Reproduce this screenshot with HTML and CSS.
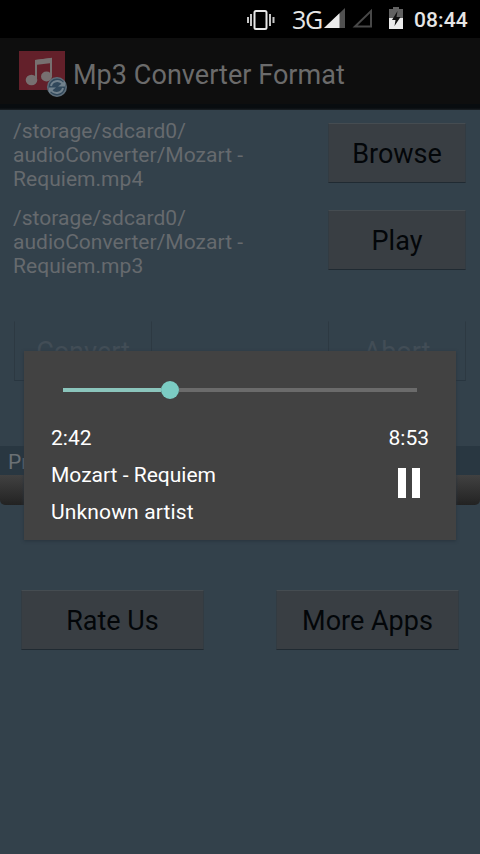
FILE: index.html
```html
<!DOCTYPE html>
<html lang="en">
<head>
<meta charset="utf-8">
<title>Mp3 Converter Format</title>
<link rel="stylesheet" href="styles.css">
</head>
<body>
<div class="screen">
  <header class="status">
    <svg class="vibrate" width="30" height="22" viewBox="0 0 30 22">
      <rect x="8.500" y="2" width="12" height="18" rx="1.500" fill="none" stroke="#e8e8e8" stroke-width="2"/>
      <path d="M5 5v12M2 8v6M24 5v12M27.500 8v6" stroke="#c8c8c8" stroke-width="2"/>
    </svg>
    <span class="network">3G</span>
    <svg class="signal" width="21" height="20" viewBox="0 0 21 20">
      <path d="M21 0v20H0z" fill="#505050"/>
      <path d="M15.500 5.200V20H0z" fill="#ececec"/>
    </svg>
    <svg class="signal-empty" width="21" height="20" viewBox="0 0 21 20">
      <path d="M19 3v15.500H3z" fill="none" stroke="#484848" stroke-width="2"/>
    </svg>
    <svg class="battery" width="14" height="22" viewBox="0 0 14 22">
      <path d="M4 0h6v2h4v20H0V2h4z" fill="#626262"/>
      <path d="M0 11h14v11H0z" fill="#ececec"/>
      <path d="M8.500 4L3 13h3.500L5.500 19l6-9H7.500z" fill="#111"/>
    </svg>
    <span class="clock">08:44</span>
  </header>
  <div class="titlebar">
    <svg class="logo" width="50" height="48" viewBox="0 0 50 48">
      <rect width="46" height="39" fill="#63202a"/>
      <path d="M17 29V10l15-2v18" fill="none" stroke="#777070" stroke-width="2"/>
      <path d="M16 9l17-2v5l-17 2z" fill="#777070"/>
      <ellipse cx="12.500" cy="29" rx="5.800" ry="5.200" fill="#777070"/>
      <ellipse cx="27.500" cy="25.500" rx="5.500" ry="5" fill="#777070"/>
      <circle cx="38" cy="36" r="9.200" fill="#31485b" stroke="#5d6d79" stroke-width="1.600"/>
      <path d="M32 35c1-5 8-7 12-2M44 37c-1 5-8 7-12 2" fill="none" stroke="#71818c" stroke-width="2"/>
      <path d="M46 30v5.500h-7zM30 42v-5.500h7z" fill="#71818c"/>
    </svg>
    <span class="title">Mp3 Converter Format</span>
  </div>
  <main class="content">
    <div class="file-row">
      <p class="path">/storage/sdcard0/<br>audioConverter/Mozart -<br>Requiem.mp4</p>
      <div class="button narrow">Browse</div>
    </div>
    <div class="file-row">
      <p class="path">/storage/sdcard0/<br>audioConverter/Mozart -<br>Requiem.mp3</p>
      <div class="button narrow">Play</div>
    </div>
    <div class="action-row">
      <div class="button narrow disabled">Convert</div>
      <div class="button narrow disabled">Abort</div>
    </div>
    <div class="progress-label">Pr</div>
    <div class="progress-track"></div>
    <div class="footer-row">
      <div class="button wide">Rate Us</div>
      <div class="button wide">More Apps</div>
    </div>
  </main>
  <section class="dialog">
    <div class="seekbar"><div class="played"></div><div class="thumb"></div><div class="remaining"></div></div>
    <div class="times"><span>2:42</span><span>8:53</span></div>
    <div class="track-info">
      <div><div class="line">Mozart - Requiem</div><div class="line artist">Unknown artist</div></div>
      <div class="pause"><i></i><i></i></div>
    </div>
  </section>
</div>
</body>
</html>
```
FILE: styles.css
```css
* { box-sizing: border-box; }
body { margin: 0; background: #33414b; font-family: Roboto, "Noto Sans", sans-serif; }
.screen { position: relative; width: 480px; height: 854px; overflow: hidden; background: #33414b; }
.status { display: flex; align-items: flex-start; height: 38px; background: #000; color: #e6e6e6; padding-left: 246px; }
.vibrate { margin-top: 9px; flex: none; }
.network { width: 29px; margin: 5px 0 0 16px; font: 25px/28px "Open Sans", sans-serif; letter-spacing: -1.2px; white-space: nowrap; }
.signal { margin: 8px 0 0 3px; flex: none; }
.signal-empty { margin: 8px 0 0 7px; flex: none; }
.battery { margin: 7px 0 0 16px; flex: none; }
.clock { margin: 6px 0 0 11px; font-size: 21px; line-height: 28px; font-weight: 500; letter-spacing: 0.1px; white-space: nowrap; }
.titlebar { display: flex; height: 72px; padding: 13px 0 0 19px; background: linear-gradient(#0e0e0e 0 66px, #080c0f 66px 70px, #1b2024 72px); }
.logo { flex: none; }
.title { margin: 8px 0 0 4px; font-size: 27px; line-height: 32px; letter-spacing: 0.05px; color: #6b6b6b; white-space: nowrap; }
.content { padding-top: 9px; }
.file-row { display: flex; justify-content: space-between; height: 87px; padding: 0 14px 0 13px; }
.path { margin: 0; font-size: 21px; line-height: 24px; letter-spacing: 0.04px; color: #666a6e; white-space: nowrap; }
.button { display: flex; align-items: center; justify-content: center; height: 60px; padding-top: 1px; font-size: 27px; line-height: 32px; color: #030609; background: #393e43; border: 1px solid #323b42; border-top-color: #454c51; border-bottom-color: #202a32; white-space: nowrap; }
.narrow { width: 138px; margin-top: 4px; }
.wide { width: 183px; }
.disabled { margin: 0; color: #424d56; background: transparent; border-top-color: transparent; border-left-color: #2d3942; border-right-color: #2d3942; border-bottom-color: #293640; }
.action-row { display: flex; justify-content: space-between; padding: 28px 14px 0; height: 153px; }
.progress-label { height: 29px; padding-left: 8px; font-size: 21px; line-height: 32px; color: #6a7074; background: #293741; }
.progress-track { height: 30px; background: linear-gradient(#414141, #292929 80%, #222); border-radius: 0 0 5px 5px; }
.footer-row { display: flex; justify-content: space-between; padding: 85px 21px 0; }
.dialog { position: absolute; left: 24px; top: 351px; width: 432px; height: 189px; background: #424242; color: #fff; font-size: 21px; line-height: 25px; box-shadow: 0 1px 3px #28343d; }
.seekbar { display: flex; align-items: center; height: 18px; margin: 30px 39px 0; }
.played { width: 98px; height: 4px; background: #8bc5bc; }
.thumb { width: 18px; height: 18px; border-radius: 50%; background: #7bccc3; }
.remaining { flex: 1; height: 4px; background: #6b6b6b; }
.times { display: flex; justify-content: space-between; margin: 27px 27px 0 27px; }
.track-info { display: flex; justify-content: space-between; padding: 12px 36px 0 27px; }
.line { height: 37px; white-space: nowrap; }
.artist { letter-spacing: 0.15px; }
.pause { display: flex; gap: 6px; padding-top: 5px; }
.pause i { width: 8px; height: 30px; background: #fff; }
```
